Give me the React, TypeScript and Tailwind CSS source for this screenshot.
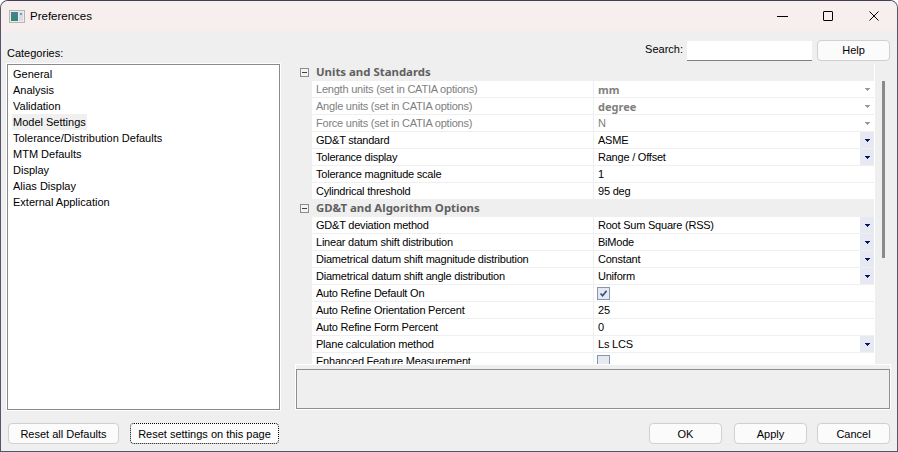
const categories = [
  "General",
  "Analysis",
  "Validation",
  "Model Settings",
  "Tolerance/Distribution Defaults",
  "MTM Defaults",
  "Display",
  "Alias Display",
  "External Application",
];

type Row = {
  label: string;
  value?: string;
  disabled?: boolean;
  bold?: boolean;
  combo?: boolean;
  check?: boolean;
  checked?: boolean;
};

const units: Row[] = [
  { label: "Length units (set in CATIA options)", value: "mm", disabled: true, bold: true, combo: true },
  { label: "Angle units (set in CATIA options)", value: "degree", disabled: true, bold: true, combo: true },
  { label: "Force units (set in CATIA options)", value: "N", disabled: true, combo: true },
  { label: "GD&T standard", value: "ASME", combo: true },
  { label: "Tolerance display", value: "Range / Offset", combo: true },
  { label: "Tolerance magnitude scale", value: "1" },
  { label: "Cylindrical threshold", value: "95 deg" },
];

const algorithm: Row[] = [
  { label: "GD&T deviation method", value: "Root Sum Square (RSS)", combo: true },
  { label: "Linear datum shift distribution", value: "BiMode", combo: true },
  { label: "Diametrical datum shift magnitude distribution", value: "Constant", combo: true },
  { label: "Diametrical datum shift angle distribution", value: "Uniform", combo: true },
  { label: "Auto Refine Default On", check: true, checked: true },
  { label: "Auto Refine Orientation Percent", value: "25" },
  { label: "Auto Refine Form Percent", value: "0" },
  { label: "Plane calculation method", value: "Ls LCS", combo: true },
  { label: "Enhanced Feature Measurement", check: true },
];

function Arrow({ color }: { color: string }) {
  return (
    <svg width="5" height="3" viewBox="0 0 5 3" shapeRendering="crispEdges">
      <path d="M0 0h5v1H4v1H3v1H2V2H1V1H0z" fill={color} />
    </svg>
  );
}

function CheckBox({ checked }: { checked?: boolean }) {
  return (
    <div className="-ml-px flex h-[13px] w-[13px] items-center justify-center border border-[#8896ad] bg-[#e6e9f1]">
      {checked && (
        <svg width="9" height="9" viewBox="0 0 9 9">
          <path d="M1.5 4.5 3.6 6.8 7.6 1.8" fill="none" stroke="#34508a" strokeWidth="1.7" />
        </svg>
      )}
    </div>
  );
}

function GridRow({ row }: { row: Row }) {
  return (
    <div className="flex h-[17px] shrink-0 bg-[#efefef] pl-[16px] tracking-[-0.22px]">
      <div
        className={`flex w-[281px] items-center border-b border-[#efefef] bg-white pl-[4px] pt-px ${
          row.disabled ? "text-[#808080]" : "text-black"
        }`}
      >
        {row.label}
      </div>
      <div className="flex flex-1 items-center border-b border-l border-[#efefef] bg-white pl-[4px]">
        {row.check ? (
          <CheckBox checked={row.checked} />
        ) : (
          <span
            className={`flex-1 ${row.disabled ? "text-[#808080]" : "text-black"} ${
              row.bold ? "font-['Noto_Sans',sans-serif] font-bold tracking-normal" : "pt-px"
            }`}
          >
            {row.value}
          </span>
        )}
        {row.combo && (
          <div className={`flex h-full w-[14px] items-center justify-center ${row.disabled ? "" : "bg-[#e6e9f2]"}`}>
            <Arrow color={row.disabled ? "#9a9a9a" : "#0a1470"} />
          </div>
        )}
      </div>
    </div>
  );
}

function GroupHeader({ title }: { title: string }) {
  return (
    <div className="flex h-[17px] shrink-0 items-center bg-[#efefef]">
      <div className="ml-[4px] flex h-[9px] w-[9px] items-center justify-center border border-[#8c8c8c] bg-[#f4f4f4]">
        <div className="h-px w-[5px] bg-[#404040]" />
      </div>
      <span className="ml-[7px] -translate-y-px font-['Noto_Sans',sans-serif] text-[11.4px] font-bold text-[#606060]">
        {title}
      </span>
    </div>
  );
}

function Button({ label, focus, className }: { label: string; focus?: boolean; className: string }) {
  return (
    <button
      className={`flex h-[21px] items-center justify-center rounded-[4px] border bg-[#fbfbfb] text-black ${
        focus ? "border-dotted border-black" : "border-[#d0d0d0]"
      } ${className}`}
    >
      {label}
    </button>
  );
}

export default function App() {
  return (
    <div className="flex h-[452px] w-[898px] flex-col overflow-hidden rounded-t-[8px] border border-t-[#3f3f5a] border-x-[#55556a] border-b-[#55556a] bg-[#efefef] font-['Liberation_Sans',sans-serif] text-[11px] leading-none text-black">
      <div className="flex h-[30px] shrink-0 items-center bg-[#f6efed]">
        <svg className="ml-[8px]" width="16" height="13" viewBox="0 0 16 13" shapeRendering="crispEdges">
          <defs>
            <linearGradient id="pane" x1="0" y1="0" x2="0" y2="1">
              <stop offset="0" stopColor="#4a7f96" />
              <stop offset="1" stopColor="#2f8a70" />
            </linearGradient>
          </defs>
          <rect x="0.5" y="0.5" width="15" height="12" fill="#ececec" stroke="#b4b4b4" />
          <rect x="2" y="2" width="7" height="9" fill="url(#pane)" />
          <rect x="10" y="2" width="4" height="9" fill="#d6dde4" />
          <rect x="11" y="3" width="2" height="2" fill="#7f9cb4" />
        </svg>
        <span className="ml-[5px] translate-y-px text-[11.5px]">Preferences</span>
        <div className="ml-auto flex items-center pr-[18px]">
          <div className="h-px w-[11px] bg-black" />
          <div className="ml-[35px] h-[10px] w-[10px] rounded-[1px] border border-black" />
          <svg className="ml-[36px]" width="10" height="10" viewBox="0 0 10 10">
            <path d="M.5.5l9 9M9.5.5l-9 9" stroke="#000" strokeWidth="1" fill="none" />
          </svg>
        </div>
      </div>

      <div className="flex min-h-0 flex-1 gap-[16px] pb-[7px] pl-[6px] pr-[7px] pt-[9px]">
        <div className="flex w-[273px] flex-col">
          <div className="flex h-[24px] translate-y-px items-center">Categories:</div>
          <div className="flex-1 border border-[#8a8a8a] bg-white pl-[5px] pt-[1px] outline outline-1 outline-white">
            {categories.map((c) => (
              <div key={c} className="flex h-[16px] items-center">
                <span className={`-ml-[1px] flex h-[16px] items-center px-[1px] pt-px ${c === "Model Settings" ? "bg-[#f0f0f0]" : ""}`}>
                  {c}
                </span>
              </div>
            ))}
          </div>
          <div className="mt-[13px] flex gap-[11px] pl-[1px]">
            <Button label="Reset all Defaults" className="w-[111px] pt-px" />
            <Button label="Reset settings on this page" focus className="w-[149px] pt-px" />
          </div>
        </div>

        <div className="flex min-w-0 flex-1 flex-col">
          <div className="flex h-[21px] shrink-0 items-center justify-end">
            <span className="mr-[4px] -translate-y-px">Search:</span>
            <div className="h-[20px] w-[125px] border-b border-[#808080] bg-white" />
            <Button label="Help" className="ml-[5px] w-[73px]" />
          </div>
          <div className="mt-[3px] flex h-[300px] shrink-0 overflow-hidden">
            <div className="flex w-[578px] flex-col overflow-hidden">
              <GroupHeader title="Units and Standards" />
              {units.map((r) => (
                <GridRow key={r.label} row={r} />
              ))}
              <GroupHeader title="GD&T and Algorithm Options" />
              {algorithm.map((r) => (
                <GridRow key={r.label} row={r} />
              ))}
            </div>
            <div className="flex-1 border-l border-white pl-[7px] pt-[17px]">
              <div className="h-[177px] w-[3px] bg-[#8a8a8a]" />
            </div>
          </div>
          <div className="-mx-px h-[46px] shrink-0 border border-white pt-[4px]">
            <div className="h-full border border-[#8f8f8f] bg-[#efefef]" />
          </div>
          <div className="mt-auto flex justify-end">
            <Button label="OK" className="w-[73px] pt-px" />
            <Button label="Apply" className="ml-[12px] w-[73px] pt-px" />
            <Button label="Cancel" className="ml-[10px] w-[73px] pt-px" />
          </div>
        </div>
      </div>
    </div>
  );
}
